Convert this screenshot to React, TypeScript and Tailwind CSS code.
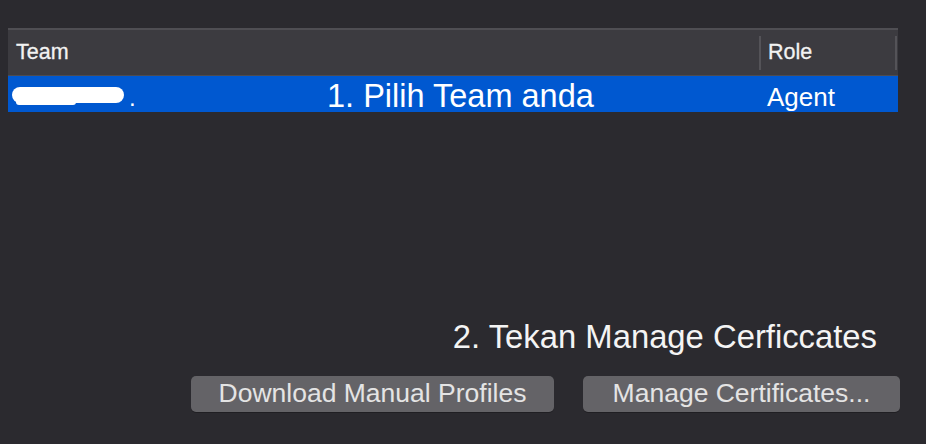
import React from "react";

export default function App() {
  const font = { fontFamily: '"Liberation Sans", Arial, sans-serif' };
  return (
    <div
      className="w-[926px] h-[444px] bg-[#2b2a2f] text-white overflow-hidden flex flex-col"
      style={font}
    >
      <div className="mt-[28px] ml-[8px] w-[890px] border-t-2 border-[#4f4e53]">
        {/* Header */}
        <div className="h-[46px] bg-[#3c3b40] border-b border-[#4d4c51] flex items-center">
          <div className="w-[751px] h-full flex items-center pl-[8px] text-[21.5px] text-[#f2f2f2] [-webkit-text-stroke:0.3px_#f2f2f2]">
            Team
          </div>
          <div className="w-[2px] h-[34px] bg-[#545358]" />
          <div className="flex-1 h-full flex items-center pl-[7px] text-[21.5px] text-[#f2f2f2] [-webkit-text-stroke:0.3px_#f2f2f2]">
            Role
          </div>
          <div className="w-[2px] h-[34px] bg-[#545358] mr-[1px]" />
        </div>
        {/* Selected row */}
        <div className="h-[36px] bg-[#0058d0] flex items-center">
          <div className="relative w-[752px] h-full flex items-center">
            <div className="ml-[4px] mt-[2px] w-[112px] h-[16px] bg-white rounded-[8px] relative">
              <div className="absolute left-[4px] top-[10px] w-[60px] h-[8px] bg-white rounded-[3px]" />
            </div>
            <span className="ml-[5px] mt-[8px] text-[24px] leading-none">.</span>
            <span className="absolute left-[319px] top-[4px] text-[32.5px] leading-[32px] whitespace-nowrap">
              1. Pilih Team anda
            </span>
          </div>
          <div className="flex-1 pl-[7px] pt-[5px] text-[26px] leading-none">Agent</div>
        </div>
      </div>

      <div className="mt-[209px] flex justify-end pr-[49px]">
        <span className="text-[32.8px] leading-[32px] text-[#f4f4f4] whitespace-nowrap">
          2. Tekan Manage Cerficcates
        </span>
      </div>

      <div className="mt-[23px] flex justify-end pr-[26px] gap-[29px]">
        <div className="w-[363px] h-[36px] rounded-[5px] bg-[#646367] flex items-center justify-center text-[26.5px] text-[#e4e4e4] whitespace-nowrap shadow-[0_1px_0_rgba(0,0,0,0.25)]">
          Download Manual Profiles
        </div>
        <div className="w-[317px] h-[36px] rounded-[5px] bg-[#646367] flex items-center justify-center text-[26.5px] text-[#e4e4e4] whitespace-nowrap shadow-[0_1px_0_rgba(0,0,0,0.25)]">
          Manage Certificates...
        </div>
      </div>
    </div>
  );
}
